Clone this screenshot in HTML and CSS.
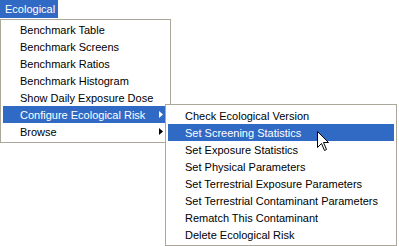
FILE: index.html
```html
<!DOCTYPE html>
<html lang="en">
<head>
    <meta charset="UTF-8">
    <meta name="viewport" content="width=device-width, initial-scale=1.0">
    <title>Ecological menu</title>
    <link rel="stylesheet" href="styles.css">
</head>
<body>
    <div class="menubar">
        <span class="menu-title">Ecological</span>
    </div>

    <ul class="menu main-menu">
        <li class="item">Benchmark Table</li>
        <li class="item">Benchmark Screens</li>
        <li class="item">Benchmark Ratios</li>
        <li class="item">Benchmark Histogram</li>
        <li class="item">Show Daily Exposure Dose</li>
        <li class="item active">Configure Ecological Risk
            <svg class="arrow" width="4" height="7" viewBox="0 0 4 7"><polygon points="0,0 4,3.5 0,7" /></svg>
        </li>
        <li class="item">Browse
            <svg class="arrow" width="4" height="7" viewBox="0 0 4 7"><polygon points="0,0 4,3.5 0,7" /></svg>
        </li>
    </ul>

    <ul class="menu sub-menu">
        <li class="item">Check Ecological Version</li>
        <li class="item active">Set Screening Statistics</li>
        <li class="item">Set Exposure Statistics</li>
        <li class="item">Set Physical Parameters</li>
        <li class="item">Set Terrestrial Exposure Parameters</li>
        <li class="item">Set Terrestrial Contaminant Parameters</li>
        <li class="item">Rematch This Contaminant</li>
        <li class="item">Delete Ecological Risk</li>
    </ul>

    <svg class="pointer" width="13" height="21" viewBox="0 0 13 21">
        <polygon points="0.5,0.5 0.5,16.5 4.5,12.5 7.5,19.5 9.5,18.5 6.5,11.5 11.5,11.5" fill="#fff" stroke="#000" stroke-width="1" stroke-linejoin="miter" />
    </svg>
</body>
</html>
```

FILE: styles.css
```css
body {
  margin: 0;
  padding: 0;
  background: #fff;
  font-family: "Liberation Sans", Arial, sans-serif;
  font-size: 11px;
  color: #000;
  position: relative;
  height: 246px;
  overflow: hidden;
}

.menubar {
  display: flex;
  height: 18px;
}

.menu-title {
  display: flex;
  align-items: center;
  width: 58px;
  padding-left: 5px;
  box-sizing: border-box;
  background: #316ac5;
  color: #fff;
}

.menu {
  list-style: none;
  margin: 0;
  background: #fff;
  border: 1px solid #aca899;
  box-sizing: border-box;
}

.main-menu {
  margin-top: 1px;
  width: 171px;
  padding: 1px 2px 2px;
}

.sub-menu {
  position: absolute;
  left: 165px;
  top: 104px;
  width: 232px;
  padding: 2px;
}

.item {
  display: flex;
  align-items: center;
  height: 17px;
  padding-left: 17px;
  white-space: nowrap;
}

.item.active {
  background: #316ac5;
  color: #fff;
}

.arrow {
  margin-left: auto;
  margin-right: 5px;
  fill: currentColor;
}

.pointer {
  position: absolute;
  left: 317px;
  top: 131px;
}
```
